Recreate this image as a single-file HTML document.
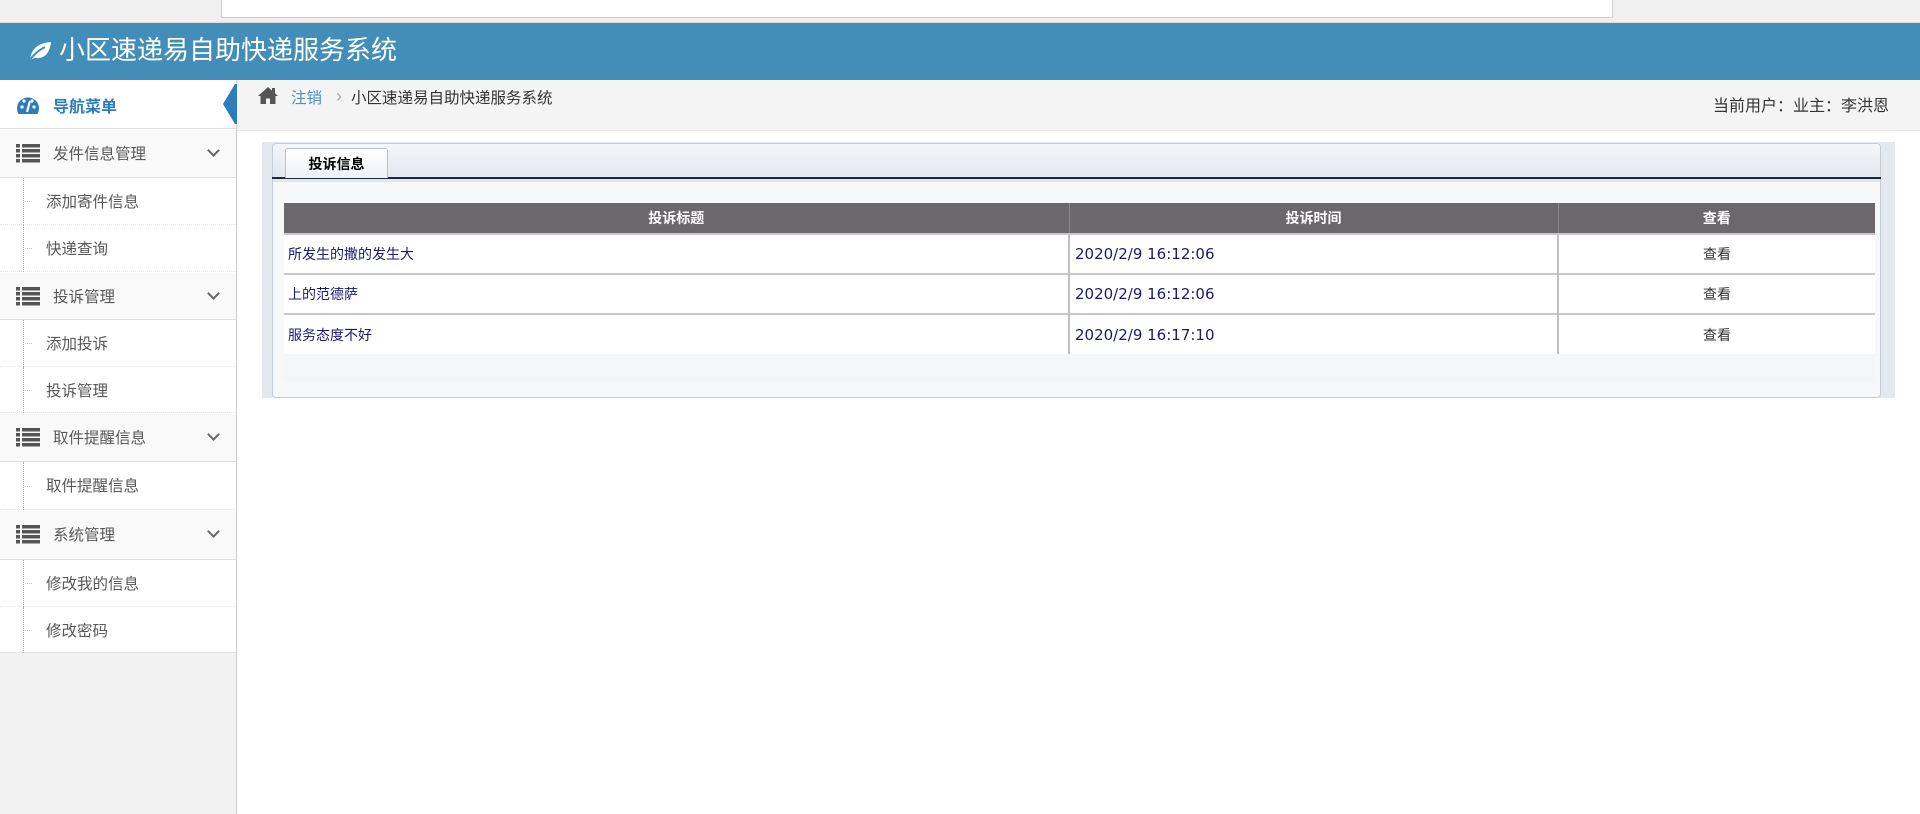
<!DOCTYPE html>
<html><head><meta charset="utf-8">
<style>
*{margin:0;padding:0;box-sizing:border-box}
body{width:1920px;height:814px;overflow:hidden;background:#fff;font-family:"Liberation Sans","Noto Sans CJK SC",sans-serif;position:relative}
.abs{position:absolute}
#chrome{left:0;top:0;width:1920px;height:23px;background:#f0f0f0;border-bottom:1px solid #dcdcdc}
#addr{left:221px;top:-2px;width:1392px;height:20px;background:#fff;border:1px solid #cfcfcf}
#hdr{left:0;top:23px;width:1920px;height:57px;background:#438eb9;color:#fff;font-size:26px;line-height:54px}
#side{left:0;top:80px;width:237px;height:734px;background:#f2f2f2;border-right:1px solid #ccc}
.row{position:absolute;left:0;width:236px;font-size:15.5px;color:#585858}
.g{background:#f9f9f9;border-bottom:1px solid #e0e0e0;border-top:1px solid #fff}
.s{background:#fff;border-bottom:1px dotted #e4e4e4}
.s span{position:absolute;left:46px}
.s:before{content:"";position:absolute;left:23px;top:0;bottom:-1px;border-left:1px dotted #9dbdd6}
.s:after{content:"";position:absolute;left:25px;top:50%;width:7px;border-top:1px dotted #ccc}
.g span{position:absolute;left:53px}
.chev{position:absolute;left:209px;width:9px;height:9px;border-right:2px solid #666;border-bottom:2px solid #666;transform:rotate(45deg)}
.list{position:absolute;left:16px;width:24px;height:19px}
#bc{left:237px;top:80px;width:1683px;height:51px;background:#f4f4f4;border-bottom:1px solid #e5e5e5;font-size:15.5px;color:#333}
#panel{left:262px;top:142px;width:1633px;height:256px;background:#e3e8ef}
#inner{left:272px;top:143px;width:1609px;height:255px;background:linear-gradient(#f4f6f9,#e0e6ee 38px,#f6f8fa 38px);border:1px solid #c5ced8;border-radius:4px}
table{position:absolute;left:284px;top:203px;width:1591px;border-collapse:collapse;font-size:14px}
th{background:#6b686b;color:#fff;height:31px;font-weight:bold;border-left:1px solid #888;font-size:14px}
td{height:40px;background:#fff;border-top:2px solid #c8c8c8;border-left:2px solid #c0c0c0;color:#1a1a6e}
.dt{padding-left:5px;font-family:'DejaVu Sans',sans-serif;font-size:15px}
</style></head><body>
<div id="chrome" class="abs"></div>
<div id="addr" class="abs"></div>
<div id="hdr" class="abs">
<svg class="abs" style="left:27px;top:17px" width="25" height="22" viewBox="0 0 25 22"><path d="M3 20 C4 10 10 3 24 2 C23 12 18 19 9 18 C7 18 5 19 3 20 Z" fill="#fff"/><path d="M2 21 C7 14 12 10 18 7" stroke="#438eb9" stroke-width="2" fill="none"/></svg>
<span class="abs" style="left:59px;top:0">小区速递易自助快递服务系统</span></div>

<div id="side" class="abs"></div>
<div class="row" style="top:80px;height:49px;background:#fff;border-bottom:1px solid #e0e0e0">
<svg class="abs" style="left:16px;top:14px" width="24" height="22" viewBox="0 0 24 22"><path d="M2.5 20 A11 11 0 1 1 21.5 20 Z" fill="#2b7dbc"/><circle cx="6" cy="13" r="1.6" fill="#fff"/><circle cx="8" cy="7" r="1.6" fill="#fff"/><circle cx="16" cy="7" r="1.6" fill="#fff"/><circle cx="18" cy="13" r="1.6" fill="#fff"/><path d="M11 18 L14 7" stroke="#fff" stroke-width="2.2"/></svg>
<span class="abs" style="left:53px;top:13px;color:#2b7dbc;font-weight:bold;font-size:16px">导航菜单</span>
<div class="abs" style="left:223px;top:4px;width:0;height:0;border-top:20px solid transparent;border-bottom:20px solid transparent;border-right:12px solid #2b7dbc"></div>
<div class="abs" style="left:235px;top:4px;width:3px;height:40px;background:#2b7dbc"></div>
</div>

<div class="row g" style="top:129px;height:49px"><svg class="list" style="top:14px" viewBox="0 0 24 19"><g fill="#555"><rect x="0" y="0" width="4" height="3.5"/><rect x="6" y="0" width="18" height="3.5"/><rect x="0" y="5" width="4" height="3.5"/><rect x="6" y="5" width="18" height="3.5"/><rect x="0" y="10" width="4" height="3.5"/><rect x="6" y="10" width="18" height="3.5"/><rect x="0" y="15" width="4" height="3.5"/><rect x="6" y="15" width="18" height="3.5"/></g></svg><span style="top:12px">发件信息管理</span><i class="chev" style="top:16px"></i></div>
<div class="row s" style="top:178px;height:47px"><span style="top:12px">添加寄件信息</span></div>
<div class="row s" style="top:225px;height:47px"><span style="top:12px">快递查询</span></div>

<div class="row g" style="top:272px;height:48px"><svg class="list" style="top:14px" viewBox="0 0 24 19"><g fill="#555"><rect x="0" y="0" width="4" height="3.5"/><rect x="6" y="0" width="18" height="3.5"/><rect x="0" y="5" width="4" height="3.5"/><rect x="6" y="5" width="18" height="3.5"/><rect x="0" y="10" width="4" height="3.5"/><rect x="6" y="10" width="18" height="3.5"/><rect x="0" y="15" width="4" height="3.5"/><rect x="6" y="15" width="18" height="3.5"/></g></svg><span style="top:12px">投诉管理</span><i class="chev" style="top:16px"></i></div>
<div class="row s" style="top:320px;height:47px"><span style="top:12px">添加投诉</span></div>
<div class="row s" style="top:367px;height:46px"><span style="top:12px">投诉管理</span></div>

<div class="row g" style="top:413px;height:49px"><svg class="list" style="top:14px" viewBox="0 0 24 19"><g fill="#555"><rect x="0" y="0" width="4" height="3.5"/><rect x="6" y="0" width="18" height="3.5"/><rect x="0" y="5" width="4" height="3.5"/><rect x="6" y="5" width="18" height="3.5"/><rect x="0" y="10" width="4" height="3.5"/><rect x="6" y="10" width="18" height="3.5"/><rect x="0" y="15" width="4" height="3.5"/><rect x="6" y="15" width="18" height="3.5"/></g></svg><span style="top:12px">取件提醒信息</span><i class="chev" style="top:16px"></i></div>
<div class="row s" style="top:462px;height:48px"><span style="top:12px">取件提醒信息</span></div>

<div class="row g" style="top:510px;height:50px"><svg class="list" style="top:14px" viewBox="0 0 24 19"><g fill="#555"><rect x="0" y="0" width="4" height="3.5"/><rect x="6" y="0" width="18" height="3.5"/><rect x="0" y="5" width="4" height="3.5"/><rect x="6" y="5" width="18" height="3.5"/><rect x="0" y="10" width="4" height="3.5"/><rect x="6" y="10" width="18" height="3.5"/><rect x="0" y="15" width="4" height="3.5"/><rect x="6" y="15" width="18" height="3.5"/></g></svg><span style="top:12px">系统管理</span><i class="chev" style="top:16px"></i></div>
<div class="row s" style="top:560px;height:47px"><span style="top:12px">修改我的信息</span></div>
<div class="row s" style="top:607px;height:46px;border-bottom:1px solid #e0e0e0"><span style="top:12px">修改密码</span></div>

<div id="bc" class="abs">
<svg class="abs" style="left:20px;top:6px" width="22" height="19" viewBox="0 0 22 19"><path d="M11 1 L1 10 L3.5 10 L3.5 18 L9 18 L9 12.5 L13 12.5 L13 18 L18.5 18 L18.5 10 L21 10 Z" fill="#555"/><rect x="15" y="2" width="3" height="5" fill="#555"/></svg>
<span class="abs" style="left:54px;top:6px;color:#4c8fbd">注销</span>
<span class="abs" style="left:99px;top:6px;color:#aaa;font-size:18px">›</span>
<span class="abs" style="left:114px;top:6px">小区速递易自助快递服务系统</span>
<span class="abs" style="left:1476px;top:12px;font-size:16px">当前用户：业主：李洪恩</span>
</div>

<div id="panel" class="abs"></div>
<div id="inner" class="abs"></div>
<div class="abs" style="left:272px;top:177px;width:1609px;height:2px;background:#1c2b36"></div>
<div class="abs" style="left:285px;top:148px;width:103px;height:30px;background:linear-gradient(#fff,#eef1f5);border:1px solid #b8c2cc;border-bottom:none;border-radius:3px 3px 0 0;font-size:14px;font-weight:bold;color:#000;text-align:center;line-height:30px">投诉信息</div>
<div class="abs" style="left:284px;top:353px;width:1591px;height:29px;background:#f5f6f8"></div>
<table>
<tr><th style="width:785px;border-left:none">投诉标题</th><th style="width:489px">投诉时间</th><th>查看</th></tr>
<tr><td style="border-left:none;padding-left:4px">所发生的撒的发生大</td><td class="dt">2020/2/9 16:12:06</td><td style="text-align:center;color:#333">查看</td></tr>
<tr><td style="border-left:none;padding-left:4px">上的范德萨</td><td class="dt">2020/2/9 16:12:06</td><td style="text-align:center;color:#333">查看</td></tr>
<tr><td style="border-left:none;padding-left:4px">服务态度不好</td><td class="dt">2020/2/9 16:17:10</td><td style="text-align:center;color:#333">查看</td></tr>
</table>
</body></html>
